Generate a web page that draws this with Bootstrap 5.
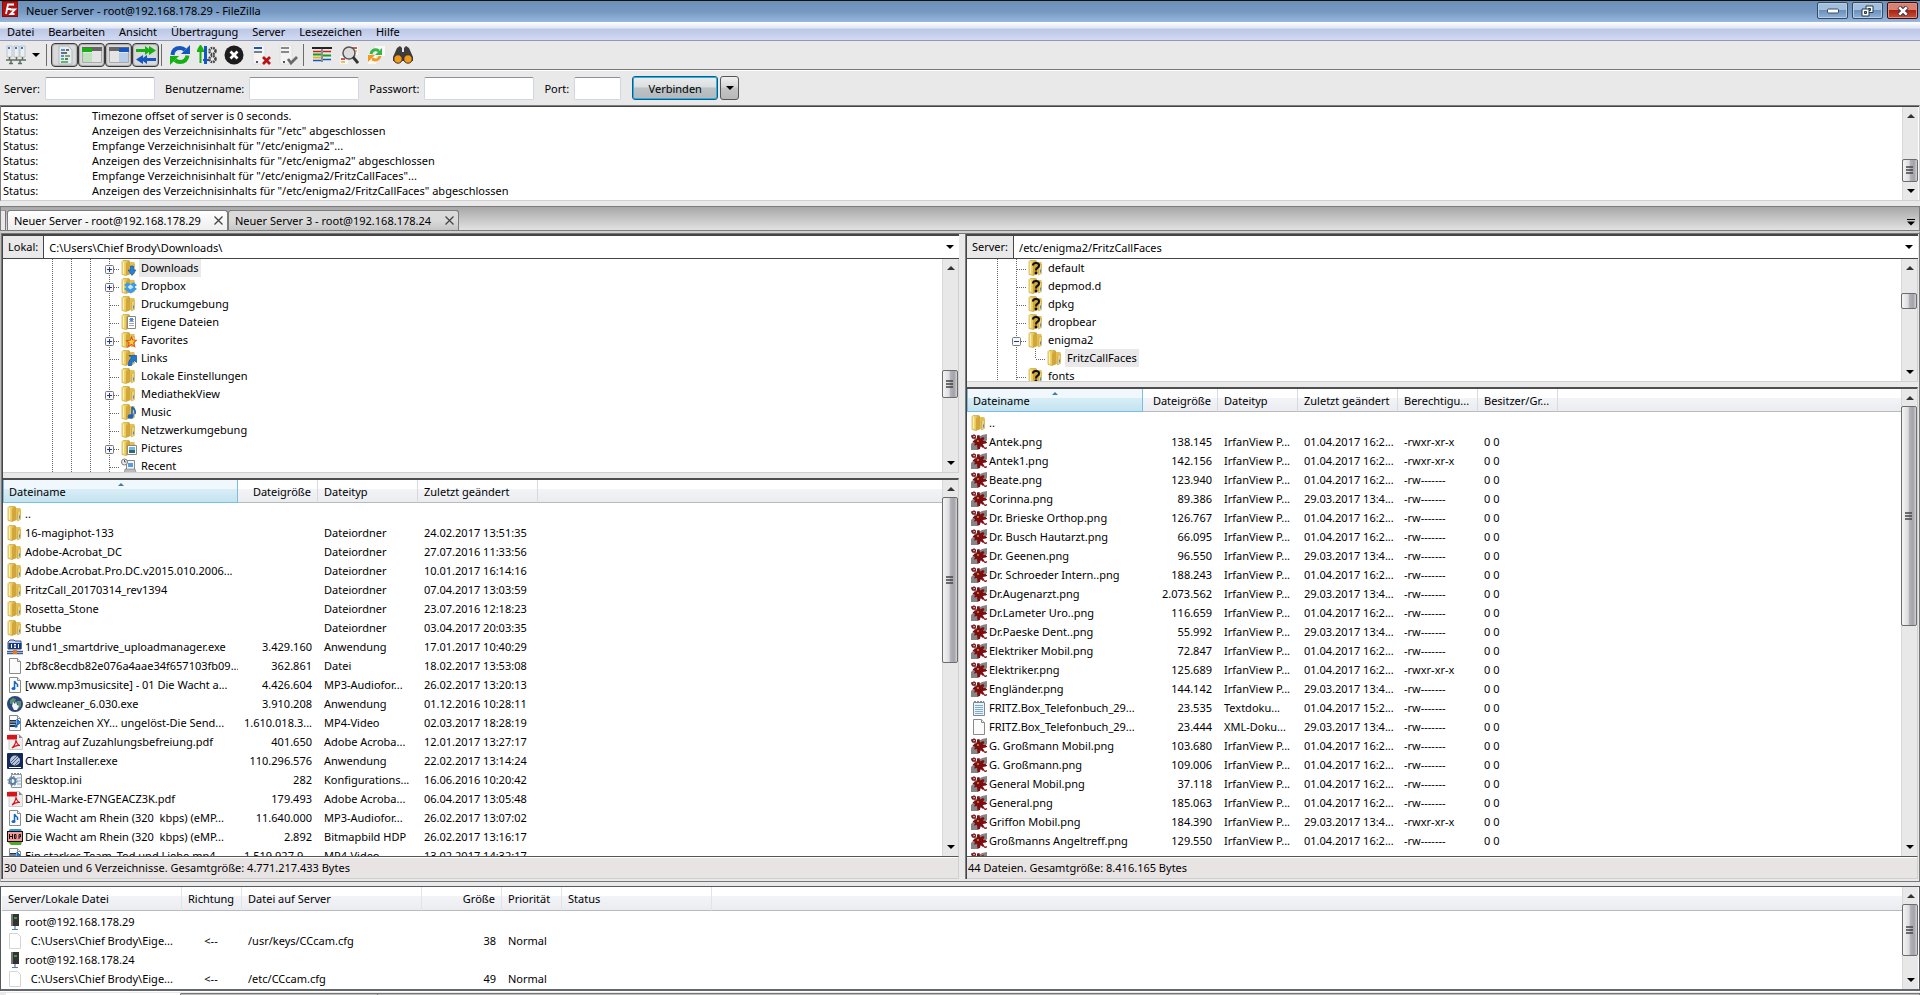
<!DOCTYPE html>
<html lang="de">
<head>
<meta charset="utf-8">
<meta name="viewport" content="width=device-width, initial-scale=1">
<title>Neuer Server - root@192.168.178.29 - FileZilla</title>
<link href="https://cdn.jsdelivr.net/npm/bootstrap@5.3.0/dist/css/bootstrap.min.css" rel="stylesheet">
<style>
:root{--face:#e9e9e9;--dark:#454545;--mid:#7b7b7b;--lite:#d0d0d0}
html,body{height:100%}
body{font-family:"Noto Sans","Open Sans",sans-serif;font-size:11px;line-height:15px;color:#000;background:var(--face)}
body>*{flex-shrink:0}
svg{flex:none;display:block}
button,input{font:inherit}
.titlebar{height:22px;border-top:1px solid #111;background:linear-gradient(#6d90b8,#7599c2 50%,#98b6de);padding:0 2px}
.winbtn{width:31px;height:17px;border:1px solid #35495f;border-radius:2px;padding:0;margin-top:1px;box-shadow:inset 0 0 0 1px #b4cce8;background:linear-gradient(#a3bfde 45%,#6b90b9 50%,#8fb2da)}
.winbtn.close-win{border-color:#3b0d0d;box-shadow:inset 0 0 0 1px #e0917f;background:linear-gradient(#d88173 45%,#a82413 50%,#c9503c)}
.winbtn svg{margin:auto}
.menubar{height:19px;background:linear-gradient(#fff,#dfe5f2 35%,#b9c6e5 38%,#d3daf2);border-bottom:1px solid #8f99b5;padding:1px 7px 0;gap:14px}
.menubar a{color:#000;text-decoration:none}
.toolbar{height:30px;border-bottom:1px solid #fff;box-shadow:inset 0 -1px #777;padding:0 6px 2px}
.tool{border:0;background:none;padding:0;width:27px;height:24px}
.tool.slim{width:20px}
.tool svg{margin:auto}
.tool.on{border:1px solid #3a3a3a;border-radius:4px;background:#dadada;box-shadow:inset 0 0 1px 1px #aaa}
.vsep{width:1px;height:22px;background:#6c6c6c;margin:0 4px 0 2px}
.quick{height:34px;padding:0 4px}
.quick label{margin-right:5px}
.quick input{width:110px;height:23px;border:1px solid #cfd6e6;border-top-color:#8a8f99;border-radius:2px;background:#fff;margin-right:10px;padding:0 4px}
.quick input.port{width:47px;margin-right:11px}
.connect{width:86px;height:24px;border:1px solid #145a86;border-radius:3px;box-shadow:inset 0 0 0 1px #23b4ea;background:linear-gradient(#ececec,#dcdfe0 45%,#bcc3c6 50%,#b2b8bb)}
.connect-more{width:19px;height:24px;border:1px solid #555;border-radius:3px;margin-left:2px;padding:0;background:linear-gradient(#f0f0f0,#d6d6d6 45%,#c4c4c4 50%,#b8b8b8)}
.connect-more svg{margin:auto}
.log{height:96px;border:1px solid var(--mid);border-bottom-color:var(--lite);border-right-color:var(--lite);box-shadow:inset 0 1px var(--dark);background:#fff;padding:1px 1px 0 0}
.log dl{padding:1px 0 0 2px}
.log dl>div{height:15px}
.log dt{width:89px;font-weight:400}
.log dd{margin:0}
.tabstrip{margin-top:5px;height:25px;border:1px solid var(--mid);background:linear-gradient(#a7a7a7,#e2e2e2)}
.tabstub{width:5px;height:20px;border-right:1px solid #777;border-top:1px solid #999;background:#e9e9e9;margin-right:1px}
.ctab{height:20px;border:1px solid var(--mid);border-bottom:0;border-radius:3px 3px 0 0;padding:0 4px 0 6px;width:231px;background:linear-gradient(#dadada 50%,#c6c6c6);}
.ctab.on{width:221px;background:linear-gradient(#fff,#eee)}
.ctab button{border:0;background:none;padding:0}
.main{flex:1 1 0;min-height:0;border-top:2px solid var(--lite);border-right:1px solid #777;border-left:1px solid #bbb;border-bottom:1px solid #777}
.main>.inner{gap:6px;min-height:0;border-top:1px solid #777;padding:0 1px 2px 0}
.side{min-width:0;border-left:1px solid var(--mid);box-shadow:inset 1px 0 var(--dark);padding-left:1px}
.side.local{flex:958 1 0}
.side.remote{flex:953 1 0}
.addr{height:25px;border-top:2px solid var(--dark);border-bottom:1px solid var(--dark);background:#fff;padding-right:5px}
.addr label{background:var(--face);border-right:1px solid var(--dark);padding:3px 5px}
.addr input{border:0;padding:0 5px;background:none;min-width:0}
.addr button{border:0;background:none;padding:0}
.pane{background:#fff;min-height:0;overflow:hidden;border-right:1px solid var(--lite)}
.tree{flex:none;border-bottom:1px solid var(--lite)}
.local .tree{height:214px}
.remote .tree{height:123px}
.tree ul{padding-left:40px}
.remote .tree ul{padding-left:21px}
.tree li{height:18px}
.tree li .nm{padding:1px 2px 2px;margin-left:2px}
.tree li .nm.sel{background:var(--face)}
.tree li .ic{margin-left:2px}
.listing{flex:1 1 0;margin-top:5px;border-top:2px solid #4e4e4e}
.files{table-layout:fixed;width:100%;border-collapse:separate;border-spacing:0;white-space:nowrap}
.files th{height:23px;padding:0 6px;font-weight:400;background:linear-gradient(#fff 40%,#f2f4f8 40%,#eaecf0);border-bottom:1px solid #b8babe;border-right:1px solid #d8dadd;overflow:hidden;position:relative}
.files th:last-child{border-right:0}
.files th.sorted{background:linear-gradient(#f0f8fd 40%,#d8eef7 40%,#c4e3ef);border:solid #78bfe3;border-width:0 1px 1px 1px;padding-left:5px}
.files th.sorted svg{position:absolute;top:2px;left:50%;margin-left:-4px}
.files td{height:19px;padding:0 6px;overflow:hidden}
.files td.fn{padding:0 0 0 4px}
.files td.fn span{padding-left:2px;white-space:pre}
.files tbody:before{content:"";display:block;height:1px}
.files .num{text-align:right}
.sbar{width:16px;flex:none;border-left:1px solid #d8d8d8;background:#e8e8e8;padding:3px 0}
.sbar .arr{height:14px}
.sbar svg{margin:auto}
.thumb{border:1px solid #6c6c6c;border-radius:2px;margin-left:-1px;background:linear-gradient(90deg,#f4f4f4,#dcdce0 45%,#b4b4ba 50%,#a2a2aa 80%,#d5d5d8)}
.state{height:23px;background:#e9e4e4;border-top:1px solid #555;border-bottom:1px solid var(--lite);border-right:1px solid var(--lite);box-shadow:inset 0 1px #fff;padding:3px 1px}
.queue{margin-top:4px;height:105px;border:1px solid #555a60;border-bottom:2px solid #63686c;background:#fff;padding:0 1px}
.queue .files th{height:24px;border-right-color:#e2e3e6}
.queue .files td.fn{padding-left:5px}
.queue .dir{text-align:center;padding-right:8px}
.qtabs{height:4px;border-top:1px solid #fff}
.qtabs div{margin-top:1px;height:2px;border-top:1px solid #777;background:#bbb;border-right:1px solid #777}
.qtabs div.on{background:#fff;border-top-color:#fff;width:175px;margin-left:6px}
.qtabs div.off{width:197px}
</style>
</head>
<body class="d-flex flex-column overflow-hidden">
<svg width="0" height="0" class="position-absolute" aria-hidden="true">
<defs>
<linearGradient id="gf" x1="0" x2="1"><stop offset="0" stop-color="#f9e68c"/><stop offset=".5" stop-color="#e8c95a"/><stop offset="1" stop-color="#c99c2c"/></linearGradient>
<symbol id="folder" viewBox="0 0 16 16"><path d="M8 2h5.500v9l-5 4z" fill="#e3bf55"/><path d="M10.500 6l3-2v9.500l-3 1.500z" fill="#eed27a" stroke="#c49a30" stroke-width=".5"/><path d="M1 1.500l1-1h5.500q1 0 1 1V14L5 15.500l-4-1z" fill="url(#gf)" stroke="#c49a30" stroke-width=".6"/><path d="M5 3.500L8.500 1v13L5 15.500z" fill="#d2a63a"/><path d="M2.500 2.500v11" stroke="#fff3b0"/><path d="M12.500 9.500v3" stroke="#3a8fe0"/></symbol>
<symbol id="page" viewBox="0 0 16 16"><path d="M2.500.5h8l3 3v12h-11z" fill="#fbfbfb" stroke="#8a8a8a"/><path d="M10.500.5v3h3" fill="#eee" stroke="#8a8a8a"/></symbol>
<symbol id="blank" viewBox="0 0 16 16"><path d="M2.500.5h8l3 3v12h-11z" fill="#fff" stroke="#d4d4d4"/></symbol>
<symbol id="irfan" viewBox="0 0 16 16"><path d="M0 1l6 3 5-3 5-1v6l-6 6-3 4H0v-6l4-4-4-3z" fill="#858585"/><path d="M6 1.500l2.500-.5.5 3.500 3-1.500 1.500 1-1.500 3 3 .3v2.200l-3.500.5 2 3-1.500 1-2.500-2L9 15l-2.500.5L6 11l-3 .5L4 9 1.500 7.500l2-1.500L6 5z" fill="#7e0d12"/><path d="M1 2l2-1 1.500 1L4 4H1.500zM13 8.500q2-1 3 .5M13 13.500q1.500 1.500 3 0" stroke="#7e0d12" fill="none" stroke-width="1.200"/><circle cx="7" cy="7" r=".8" fill="#ff3"/></symbol>
<symbol id="text" viewBox="0 0 16 16"><path d="M2.500 2.500h11v13h-11z" fill="#e8f2fa" stroke="#7d8a96"/><path d="M3 1.500h2m1 0h2m1 0h2m1 0h1" stroke="#888"/><path d="M4 5.500h8M4 7.500h8M4 9.500h8M4 11.500h8M4 13.500h8" stroke="#86abc9"/></symbol>
<symbol id="mp3" viewBox="0 0 16 16"><use href="#page"/><path d="M7.500 4v7M7.500 4q1 2 3 3.500V10" fill="none" stroke="#1567c4" stroke-width="1.500"/><ellipse cx="6.500" cy="11.500" rx="2" ry="1.600" fill="#1567c4"/></symbol>
<symbol id="mp4" viewBox="0 0 16 16"><use href="#page"/><path d="M3 5h6v7H3z" fill="#20364e"/><path d="M3 7h6M3 9.500h6" stroke="#a9cbe8"/><path d="M10 4v6q3-1 3-3z" fill="#2b86dc" stroke="#1567c4"/><circle cx="9" cy="11" r="1.700" fill="#1567c4"/></symbol>
<symbol id="pdf" viewBox="0 0 16 16"><path d="M2 .5h10l3.500 3.500v11.500H2z" fill="#eee" stroke="#ccc"/><path d="M12 .5V4h3.500z" fill="#888"/><path d="M0 1h10v4.500H0z" fill="#d8131a"/><path d="M5 14q4-4 4-8 1 5 4 5.500-4-1-8 2.500z" fill="none" stroke="#d8131a" stroke-width="1.200"/></symbol>
<symbol id="adw" viewBox="0 0 16 16"><circle cx="8" cy="8" r="8" fill="#27477e"/><path d="M3 4l3-2 3 1-2 4-4 1zM10 5l4 0 0 5-3 3z" fill="#5d8f6c"/><path d="M6 6l2 2 1-3 1 4 2 1-2 4H7l-2-4z" fill="#f5f5f5"/></symbol>
<symbol id="chart" viewBox="0 0 16 16"><rect width="16" height="16" rx="1" fill="#12295c"/><circle cx="8" cy="7.500" r="5" fill="#b9c4d6"/><path d="M4 9l6-6M5 11l7-7M8 12l4-4" stroke="#4e6287"/><path d="M2 14.500h12" stroke="#fff"/></symbol>
<symbol id="ini" viewBox="0 0 16 16"><path d="M4.500 2.500h10v13h-10z" fill="#f2f6f9" stroke="#8c969f"/><path d="M4 1.500h2m1 0h2m1 0h2m1 0h1" stroke="#888"/><path d="M10 6h4M10 9h4M10 12h4" stroke="#86abc9"/><circle cx="5.500" cy="9" r="3" fill="none" stroke="#5c7d9e" stroke-width="2"/><circle cx="5.500" cy="9" r="4.600" fill="none" stroke="#5c7d9e" stroke-dasharray="1.800 1.800"/></symbol>
<symbol id="hdp" viewBox="0 0 16 16"><path d="M3 0h11l1 3H1z" fill="#279bd3"/><path d="M1 13h14l-1 3H4z" fill="#58a52e"/><rect x=".5" y="2.500" width="15" height="10" fill="#f39a98" stroke="#111"/><path d="M2.500 5v5M5.500 5v5M3 7.500h2M7.500 5.500h1.500v4H7.500zM12 10V5.500h1.500v2.500H12" stroke="#111" fill="none"/></symbol>
<symbol id="einsund" viewBox="0 0 16 16"><path d="M1 3l2-2h4l1 1h6v8H1z" fill="#c9d4ea" stroke="#35507f"/><rect x="1.500" y="4" width="13" height="6" fill="#173a80"/><path d="M4.500 5v4M11.500 5v4M7 5.500h2M7 8.500h2M7 7h2" stroke="#fff"/><path d="M0 12.500h16M0 14.500h16" stroke="#44608f" stroke-width="1.500"/><rect x="6" y="11" width="4" height="4" fill="#e8742a"/></symbol>
<symbol id="server" viewBox="0 0 16 16"><path d="M4 0h8v12H4z" fill="#333"/><path d="M4 0h2v12H4z" fill="#777"/><path d="M7 3h3v2H7z" fill="#2e9b3c"/><path d="M8 12v3M5 15.500h6" stroke="#5d7f9e" stroke-width="1.200"/></symbol>
<symbol id="f-down" viewBox="0 0 16 16"><use href="#folder"/><path d="M9.500 6h3v4h2.500l-4 5.500L7 10h2.500z" fill="#2381e0" stroke="#0e4fa0" stroke-width=".6"/></symbol>
<symbol id="f-box" viewBox="0 0 16 16"><use href="#folder"/><path d="M6.500 4.500L9.500 6l3-1.500 3.500 2.500-2.500 2 2.500 2-3.500 2.500-3 2-3-2L3 11l2.500-2L3 7z" fill="#3d9ae8"/><path d="M9.500 6.500l3 2.500-3 2.500-3-2.500z" fill="#cfe6fa"/></symbol>
<symbol id="f-doc" viewBox="0 0 16 16"><use href="#folder"/><path d="M6.500 2.500h8v12h-8z" fill="#fff" stroke="#888"/><path d="M8 5.500h5M8 7.500h5M8 9.500h5M8 11.500h5" stroke="#9ab"/><path d="M9 4h3v3H9z" fill="#4a90d9"/></symbol>
<symbol id="f-star" viewBox="0 0 16 16"><use href="#folder"/><path d="M10.500 5l1.300 3 3.700.3-2.800 2.300 1 4-3.200-2.200L7 15l1.200-4-2.700-2.500 3.700-.3z" fill="#ffd23c" stroke="#e2571b" stroke-width="1.100"/></symbol>
<symbol id="f-link" viewBox="0 0 16 16"><use href="#folder"/><path d="M8 5.500h7.500v7l-2-2q-3 1-3 5l-3 .5q-.5-6 3-8z" fill="#2078d6" stroke="#0d4a96" stroke-width=".7"/></symbol>
<symbol id="f-music" viewBox="0 0 16 16"><use href="#folder"/><path d="M11 3v9M11 3q4 3 3 7" fill="none" stroke="#1b62bd" stroke-width="1.600"/><ellipse cx="9.500" cy="12.500" rx="2.800" ry="2.200" fill="#1b62bd"/></symbol>
<symbol id="f-pic" viewBox="0 0 16 16"><use href="#folder"/><path d="M6.500 5.500h9v9h-9z" fill="#fff" stroke="#888"/><path d="M8 7h6v3H8z" fill="#6db7ea"/><path d="M8 10h6v3H8z" fill="#2b6d63"/></symbol>
<symbol id="f-recent" viewBox="0 0 16 16"><path d="M5.500 2.500h8v9h-8z" fill="#f2f5f9" stroke="#888"/><path d="M7 5h5v4H7z" fill="#5a9ddd"/><path d="M4 11h10l1.500 5H3z" fill="#b9bdc2" stroke="#777" stroke-width=".6"/><circle cx="3.500" cy="4" r="3" fill="#eee" stroke="#777"/><path d="M3.500 2v2H5" stroke="#555" fill="none"/></symbol>
<symbol id="f-q" viewBox="0 0 16 16"><use href="#folder"/><path d="M5 5.500Q5 3 8 3q3 0 3 2.500 0 1.500-1.500 2.300Q8 8.500 8 10.500" fill="none" stroke="#111" stroke-width="2.200"/><circle cx="8" cy="13" r="1.400" fill="#111"/></symbol>
<symbol id="g-v" viewBox="0 0 19 18"><path d="M9.500 0v18" stroke="#666" stroke-dasharray="1 1"/></symbol>
<symbol id="g-t" viewBox="0 0 19 18"><path d="M9.500 0v18M10 10.500h9" stroke="#666" stroke-dasharray="1 1"/></symbol>
<symbol id="g-l" viewBox="0 0 19 18"><path d="M9.500 0v10M10 10.500h9" stroke="#666" stroke-dasharray="1 1" fill="none"/></symbol>
<symbol id="g-plus" viewBox="0 0 19 18"><use href="#g-t"/><rect x="5.500" y="6.500" width="8" height="8" rx="1" fill="#f8f8f8" stroke="#777"/><path d="M7 10.500h5M9.500 8v5" stroke="#1c3b8c"/></symbol>
<symbol id="g-minus" viewBox="0 0 19 18"><use href="#g-t"/><rect x="5.500" y="6.500" width="8" height="8" rx="1" fill="#f8f8f8" stroke="#777"/><path d="M7 10.500h5" stroke="#1c3b8c"/></symbol>
<symbol id="dn" viewBox="0 0 8 4"><path d="M0 0h8L4 4z"/></symbol>
<symbol id="up" viewBox="0 0 8 4"><path d="M0 4h8L4 0z" fill="#333"/></symbol>
<symbol id="grip" viewBox="0 0 8 8"><path d="M0 1h7M0 4h7M0 7h7" stroke="#444" stroke-width="1.400"/></symbol>
<symbol id="x" viewBox="0 0 9 9"><path d="M.5.500l8 8M8.500.500l-8 8" stroke="#444" stroke-width="1.300"/></symbol>
</defs>
</svg>

<header class="titlebar d-flex align-items-start">
  <svg width="16" height="16" viewBox="0 0 16 16"><rect width="16" height="16" fill="#b01212"/><rect x=".5" y=".5" width="15" height="15" fill="none" stroke="#6d0505" stroke-dasharray="1 1"/><path d="M4 13L6 3.500h6M5 8h4M8 8.500h5l-4.500 4.500h4" fill="none" stroke="#fff" stroke-width="1.800"/></svg>
  <span class="flex-grow-1 ps-2 pt-1 lh-1">Neuer Server - root@192.168.178.29 - FileZilla</span>
  <div class="d-flex gap-1" style="column-gap:2px">
    <button class="winbtn" type="button" aria-label="Minimieren"><svg width="12" height="6" viewBox="0 0 12 6"><rect x=".5" y="1" width="11" height="4" rx="1" fill="#fff" stroke="#3a4a60"/></svg></button>
    <button class="winbtn" type="button" aria-label="Verkleinern"><svg width="13" height="12" viewBox="0 0 13 12"><path d="M5 1h7v6.500H5z" fill="#fff" stroke="#27364b"/><path d="M7.500 3.500h2v2h-2z" fill="#7fa2c9" stroke="#27364b"/><path d="M1 4h7v7H1z" fill="#fff" stroke="#27364b"/><path d="M3.500 6.500h2v2h-2z" fill="#7fa2c9" stroke="#27364b"/></svg></button>
    <button class="winbtn close-win" type="button" aria-label="Schließen"><svg width="12" height="10" viewBox="0 0 12 10"><path d="M2 1l8 8M10 1L2 9" stroke="#3d3040" stroke-width="4.500"/><path d="M2.300 1.300l7.400 7.400M9.700 1.300L2.300 8.700" stroke="#fff" stroke-width="2.600"/></svg></button>
  </div>
</header>

<nav class="menubar d-flex align-items-center">
  <a href="#">Datei</a><a href="#">Bearbeiten</a><a href="#">Ansicht</a><a href="#">Übertragung</a><a href="#">Server</a><a href="#">Lesezeichen</a><a href="#">Hilfe</a>
</nav>

<div class="toolbar d-flex align-items-center" role="toolbar">
  <button class="tool slim" type="button" aria-label="Servermanager"><svg width="20" height="20" viewBox="0 0 20 20"><path d="M1 1h5v11H1zM8 1h5v11H8zM14 1h5v11h-5z" fill="#eceff2" stroke="#bcc3c9"/><path d="M2 3h2M9 3h2M15 3h2" stroke="#2b7bd6" stroke-width="2"/><path d="M3.500 12v3M10.500 12v3M16.500 12v3M0 15h20M3 18.500h4M12 18.500h4M5 15v3M14 15v3" stroke="#5e6d62" stroke-width="1.500"/></svg></button>
  <button class="tool slim" type="button" aria-label="Serverliste"><svg width="8" height="4"><use href="#dn"/></svg></button>
  <span class="vsep ms-0"></span>
  <button class="tool on" type="button" aria-label="Protokoll"><svg width="20" height="20" viewBox="0 0 20 20"><path d="M4 1h9l4 4v14H4z" fill="#e8edf0" stroke="#b3babf"/><path d="M6 5h4M6 11h3" stroke="#2b6fc6" stroke-width="1.500"/><path d="M11 5h3M6 8h6M10 14h3" stroke="#444" stroke-width="1.500"/><path d="M10 11h5M6 14h3M6 17h7" stroke="#3a9f48" stroke-width="1.500"/></svg></button>
  <button class="tool on" type="button" aria-label="Lokaler Verzeichnisbaum"><svg width="22" height="20" viewBox="0 0 22 20"><path d="M1.500 2.500h19v15h-19z" fill="#e4e4e4" stroke="#aaa"/><path d="M1 2h20v4H1z" fill="#666"/><path d="M1 3h10v4H1z" fill="#14b014"/><path d="M2 8h9v9H2z" fill="#bfe0bf"/></svg></button>
  <button class="tool on" type="button" aria-label="Server-Verzeichnisbaum"><svg width="22" height="20" viewBox="0 0 22 20"><path d="M1.500 2.500h19v15h-19z" fill="#e4e4e4" stroke="#aaa"/><path d="M1 2h20v4H1z" fill="#666"/><path d="M11 3h10v4H11z" fill="#1457c0"/><path d="M11 8h9v9h-9z" fill="#b9cde8"/></svg></button>
  <button class="tool on" type="button" aria-label="Warteschlange"><svg width="20" height="20" viewBox="0 0 20 20"><path d="M0 4h3v3H0zM3 4h6V1l4 3V1l7 4.500-7 4.500V7L9 10V7H3z" fill="#14b014"/><path d="M20 13h-3v3h3zM17 13h-6v-3l-4 3v-3l-7 4.500L7 19v-3l4 3v-3h6z" fill="#1457c0"/></svg></button>
  <span class="vsep"></span>
  <button class="tool" type="button" aria-label="Aktualisieren"><svg width="20" height="20" viewBox="0 0 20 20"><path d="M2.500 10Q3 3 10 3q3 0 5 2" fill="none" stroke="#1457c0" stroke-width="4"/><path d="M11 9h9V0z" fill="#1457c0"/><path d="M17.500 10.500q-1 6.500-7.500 6.500-3 0-5-2" fill="none" stroke="#14b014" stroke-width="4"/><path d="M9 11H0v9z" fill="#14b014"/></svg></button>
  <button class="tool" type="button" aria-label="Verarbeiten"><svg width="20" height="20" viewBox="0 0 20 20"><path d="M3.500 1v17M0 6h7M1 5l2.500-4L6 5" stroke="#14b014" stroke-width="2" fill="none"/><path d="M8.500 1v18" stroke="#1457c0" stroke-width="3"/><path d="M6 15h6" stroke="#1457c0" stroke-width="2"/><circle cx="15.500" cy="6" r="3" fill="none" stroke="#444" stroke-width="2.500" stroke-dasharray="1.600 .8"/><circle cx="15.500" cy="14" r="3" fill="none" stroke="#444" stroke-width="2.500" stroke-dasharray="1.600 .8"/></svg></button>
  <button class="tool" type="button" aria-label="Abbrechen"><svg width="20" height="20" viewBox="0 0 20 20"><circle cx="10" cy="10" r="9.500" fill="#1c1c1c"/><path d="M6.500 6.500l7 7M13.500 6.500l-7 7" stroke="#fff" stroke-width="2.800"/></svg></button>
  <button class="tool" type="button" aria-label="Trennen"><svg width="20" height="20" viewBox="0 0 20 20"><path d="M2 0h12v19H2z" fill="#f3f3f3" stroke="#e0e0e0"/><path d="M3 3h8" stroke="#1457c0" stroke-width="2"/><path d="M3 7h8" stroke="#555" stroke-width="1.500"/><path d="M5 17h2" stroke="#555" stroke-width="2"/><path d="M12 12l7 7M19 12l-7 7" stroke="#b81414" stroke-width="2.800"/></svg></button>
  <button class="tool" type="button" aria-label="Verbinden"><svg width="20" height="20" viewBox="0 0 20 20"><path d="M2 0h12v19H2z" fill="#f3f3f3" stroke="#e0e0e0"/><path d="M3 3h8M3 7h8" stroke="#666" stroke-width="1.500"/><path d="M5 17h2" stroke="#555" stroke-width="2"/><path d="M10 14l3 4 6-6" fill="none" stroke="#6a6a6a" stroke-width="2.800"/></svg></button>
  <span class="vsep"></span>
  <button class="tool" type="button" aria-label="Filter"><svg width="20" height="20" viewBox="0 0 20 20"><path d="M0 3h20" stroke="#222" stroke-width="2"/><path d="M1 6.500h8M11 6.500h8" stroke="#c62020" stroke-width="1.500"/><path d="M1 9.500h8M11 10.500h8" stroke="#14a014" stroke-width="1.800"/><path d="M1 12.500h8" stroke="#e9b21d" stroke-width="1.800"/><path d="M1 15.500h8M11 14.500h8" stroke="#1457c0" stroke-width="1.500"/><path d="M10 2v15" stroke="#333"/></svg></button>
  <button class="tool" type="button" aria-label="Vergleich"><svg width="20" height="20" viewBox="0 0 20 20"><path d="M10 1h9v9h-9zM1 11h8v8H1z" fill="#f6f6f6"/><path d="M13 3h5M2 14h4" stroke="#c62020" stroke-width="1.500"/><path d="M14 6h4M2 17h4" stroke="#e9b21d" stroke-width="1.500"/><circle cx="10" cy="8" r="6" fill="#dcdcdc" stroke="#555" stroke-width="1.500"/><path d="M14 12l5 6" stroke="#333" stroke-width="2.800"/></svg></button>
  <button class="tool" type="button" aria-label="Synchron"><svg width="20" height="20" viewBox="0 0 20 20"><path d="M9 1h10v10H9zM2 10h8v9H2z" fill="#f8f8f8"/><path d="M5 9q1-5 6-4l2 1" fill="none" stroke="#35b648" stroke-width="3"/><path d="M9 10h7V3z" fill="#35b648"/><path d="M14 11q-1 4-5 4l-3-1" fill="none" stroke="#f39a1e" stroke-width="3"/><path d="M9 10H2v7z" fill="#f39a1e"/></svg></button>
  <button class="tool" type="button" aria-label="Suchen"><svg width="20" height="20" viewBox="0 0 20 20"><path d="M4 3l3-2 2 2v4h2V3l2-2 3 2 4 9v4H0v-4z" fill="#3d3d3d"/><circle cx="5" cy="14" r="4.200" fill="#f29a18" stroke="#333"/><circle cx="15" cy="14" r="4.200" fill="#f29a18" stroke="#333"/></svg></button>
</div>

<form class="quick d-flex align-items-center" onsubmit="return false">
  <label for="q1">Server:</label><input id="q1" type="text">
  <label for="q2">Benutzername:</label><input id="q2" type="text">
  <label for="q3">Passwort:</label><input id="q3" type="password">
  <label for="q4">Port:</label><input id="q4" type="text" class="port">
  <button class="connect" type="submit">Verbinden</button>
  <button class="connect-more" type="button" aria-label="Verlauf"><svg width="8" height="4"><use href="#dn"/></svg></button>
</form>

<section class="log d-flex">
  <dl class="flex-grow-1 mb-0">
    <div class="d-flex"><dt>Status:</dt><dd>Timezone offset of server is 0 seconds.</dd></div>
    <div class="d-flex"><dt>Status:</dt><dd>Anzeigen des Verzeichnisinhalts für "/etc" abgeschlossen</dd></div>
    <div class="d-flex"><dt>Status:</dt><dd>Empfange Verzeichnisinhalt für "/etc/enigma2"...</dd></div>
    <div class="d-flex"><dt>Status:</dt><dd>Anzeigen des Verzeichnisinhalts für "/etc/enigma2" abgeschlossen</dd></div>
    <div class="d-flex"><dt>Status:</dt><dd>Empfange Verzeichnisinhalt für "/etc/enigma2/FritzCallFaces"...</dd></div>
    <div class="d-flex"><dt>Status:</dt><dd>Anzeigen des Verzeichnisinhalts für "/etc/enigma2/FritzCallFaces" abgeschlossen</dd></div>
  </dl>
  <div class="sbar" data-bar="36,22,1,grip"></div>
</section>

<div class="tabstrip d-flex align-items-end">
  <span class="tabstub"></span>
  <div class="ctab on d-flex align-items-center justify-content-between"><span>Neuer Server - root@192.168.178.29</span><button type="button" aria-label="Tab schließen"><svg width="9" height="9"><use href="#x"/></svg></button></div>
  <div class="ctab d-flex align-items-center justify-content-between"><span>Neuer Server 3 - root@192.168.178.24</span><button type="button" aria-label="Tab schließen"><svg width="9" height="9"><use href="#x"/></svg></button></div>
  <svg class="ms-auto me-1 mb-1" width="8" height="7" viewBox="0 0 8 7"><path d="M0 0h8v1H0zM0 2.500h8L4 6.500z"/></svg>
</div>

<main class="main d-flex">
  <div class="inner d-flex flex-grow-1">
    <section class="side local d-flex flex-column">
      <div class="addr d-flex align-items-stretch"><label for="lp">Lokal:</label><input id="lp" class="flex-grow-1" value="C:\Users\Chief Brody\Downloads\"><button type="button" aria-label="Verlauf"><svg width="8" height="4"><use href="#dn"/></svg></button></div>
      <div class="pane tree d-flex"><ul class="list-unstyled mb-0 flex-grow-1" id="ltree"></ul><div class="sbar" data-bar="96,26,58,grip"></div></div>
      <div class="pane listing d-flex"><div class="flex-grow-1 overflow-hidden">
        <table class="files"><colgroup><col style="width:235px"><col style="width:80px"><col style="width:100px"><col style="width:120px"><col></colgroup>
        <thead><tr><th class="sorted">Dateiname<svg width="8" height="4" viewBox="0 0 8 4"><path d="M1 4h6L4 1z" fill="#3b7fa5"/></svg></th><th class="num">Dateigröße</th><th>Dateityp</th><th>Zuletzt geändert</th><th></th></tr></thead><tbody id="llist"></tbody></table></div>
        <div class="sbar" data-bar="0,164,177,grip"></div></div>
      <div class="state">30 Dateien und 6 Verzeichnisse. Gesamtgröße: 4.771.217.433 Bytes</div>
    </section>
    <section class="side remote d-flex flex-column">
      <div class="addr d-flex align-items-stretch"><label for="rp">Server:</label><input id="rp" class="flex-grow-1" value="/etc/enigma2/FritzCallFaces"><button type="button" aria-label="Verlauf"><svg width="8" height="4"><use href="#dn"/></svg></button></div>
      <div class="pane tree d-flex"><ul class="list-unstyled mb-0 flex-grow-1" id="rtree"></ul><div class="sbar" data-bar="17,15,56,"></div></div>
      <div class="pane listing d-flex"><div class="flex-grow-1 overflow-hidden">
        <table class="files"><colgroup><col style="width:176px"><col style="width:75px"><col style="width:80px"><col style="width:100px"><col style="width:80px"><col style="width:80px"><col></colgroup>
        <thead><tr><th class="sorted">Dateiname<svg width="8" height="4" viewBox="0 0 8 4"><path d="M1 4h6L4 1z" fill="#3b7fa5"/></svg></th><th class="num">Dateigröße</th><th>Dateityp</th><th>Zuletzt geändert</th><th>Berechtigu...</th><th>Besitzer/Gr...</th><th></th></tr></thead><tbody id="rlist"></tbody></table></div>
        <div class="sbar" data-bar="0,218,214,grip"></div></div>
      <div class="state">44 Dateien. Gesamtgröße: 8.416.165 Bytes</div>
    </section>
  </div>
</main>

<section class="queue d-flex"><div class="flex-grow-1 overflow-hidden">
  <table class="files"><colgroup><col style="width:180px"><col style="width:60px"><col style="width:180px"><col style="width:80px"><col style="width:60px"><col style="width:150px"><col></colgroup>
  <thead><tr><th>Server/Lokale Datei</th><th>Richtung</th><th>Datei auf Server</th><th class="num">Größe</th><th>Priorität</th><th>Status</th><th></th></tr></thead><tbody id="qlist"></tbody></table></div>
  <div class="sbar" data-bar="0,51,16,grip"></div>
</section>
<div class="qtabs d-flex"><div class="on"></div><div class="off"></div><div class="flex-grow-1"></div></div>

<script>
const icon=(n,c='')=>`<svg class="${c}" width="16" height="16"><use href="#${n}"/></svg>`;
const guide=n=>`<svg width="19" height="18"><use href="#g-${n}"/></svg>`;
const tree=(id,rows)=>document.getElementById(id).innerHTML=rows.map(([g,i,t,s])=>`<li class="d-flex align-items-center">${g.split(' ').map(guide).join('')}${icon(i,'ic')}<span class="nm${s?' sel':''}">${t}</span></li>`).join('');
tree('ltree',[['p','f-down','Downloads',1],['p','f-box','Dropbox'],['t','folder','Druckumgebung'],['t','f-doc','Eigene Dateien'],['p','f-star','Favorites'],['t','f-link','Links'],['t','folder','Lokale Einstellungen'],['p','folder','MediathekView'],['t','f-music','Music'],['t','folder','Netzwerkumgebung'],['p','f-pic','Pictures'],['t','f-recent','Recent']].map(r=>['v v v '+(r[0]=='p'?'plus':'t'),...r.slice(1)]));
tree('rtree',[['v t','f-q','default'],['v t','f-q','depmod.d'],['v t','f-q','dpkg'],['v t','f-q','dropbear'],['v minus','folder','enigma2'],['v v l','folder','FritzCallFaces',1],['v t','f-q','fonts']]);

const list=(id,rows,num)=>document.getElementById(id).innerHTML=rows.trim().split('\n').map(l=>{
  const [ic,name,...c]=l.split('|');
  return `<tr><td class="fn"><div class="d-flex align-items-center">${icon(ic)}<span>${name}</span></div></td>`+c.map((v,k)=>`<td class="${k==num?'num':v=='&lt;--'?'dir':''}">${v}</td>`).join('')+'</tr>';
}).join('');
list('llist',`folder|..||||
folder|16-magiphot-133||Dateiordner|24.02.2017 13:51:35|
folder|Adobe-Acrobat_DC||Dateiordner|27.07.2016 11:33:56|
folder|Adobe.Acrobat.Pro.DC.v2015.010.2006...||Dateiordner|10.01.2017 16:14:16|
folder|FritzCall_20170314_rev1394||Dateiordner|07.04.2017 13:03:59|
folder|Rosetta_Stone||Dateiordner|23.07.2016 12:18:23|
folder|Stubbe||Dateiordner|03.04.2017 20:03:35|
einsund|1und1_smartdrive_uploadmanager.exe|3.429.160|Anwendung|17.01.2017 10:40:29|
page|2bf8c8ecdb82e076a4aae34f657103fb09...|362.861|Datei|18.02.2017 13:53:08|
mp3|[www.mp3musicsite] - 01 Die Wacht a...|4.426.604|MP3-Audiofor...|26.02.2017 13:20:13|
adw|adwcleaner_6.030.exe|3.910.208|Anwendung|01.12.2016 10:28:11|
mp4|Aktenzeichen XY... ungelöst-Die Send...|1.610.018.3...|MP4-Video|02.03.2017 18:28:19|
pdf|Antrag auf Zuzahlungsbefreiung.pdf|401.650|Adobe Acroba...|12.01.2017 13:27:17|
chart|Chart Installer.exe|110.296.576|Anwendung|22.02.2017 13:14:24|
ini|desktop.ini|282|Konfigurations...|16.06.2016 10:20:42|
pdf|DHL-Marke-E7NGEACZ3K.pdf|179.493|Adobe Acroba...|06.04.2017 13:05:48|
mp3|Die Wacht am Rhein (320  kbps) (eMP...|11.640.000|MP3-Audiofor...|26.02.2017 13:07:02|
hdp|Die Wacht am Rhein (320  kbps) (eMP...|2.892|Bitmapbild HDP|26.02.2017 13:16:17|
mp4|Ein starkes Team_Tod und Liebe.mp4|1.519.927.9...|MP4-Video|13.02.2017 14:32:17|`,0);
const a='01.04.2017 16:2...',b='29.03.2017 13:4...',x='-rwxr-xr-x',w='-rw-------';
list('rlist','folder|..||||||\n'+[['Antek.png','138.145',a,x],['Antek1.png','142.156',a,x],['Beate.png','123.940',a,w],['Corinna.png','89.386',b,w],['Dr. Brieske Orthop.png','126.767',a,w],['Dr. Busch Hautarzt.png','66.095',a,w],['Dr. Geenen.png','96.550',b,w],['Dr. Schroeder Intern..png','188.243',a,w],['Dr.Augenarzt.png','2.073.562',b,w],['Dr.Lameter Uro..png','116.659',a,w],['Dr.Paeske Dent..png','55.992',b,w],['Elektriker Mobil.png','72.847',a,w],['Elektriker.png','125.689',a,x],['Engländer.png','144.142',b,w],['FRITZ.Box_Telefonbuch_29...','23.535','01.04.2017 15:2...',w,'text','Textdoku...'],['FRITZ.Box_Telefonbuch_29...','23.444',b,w,'page','XML-Doku...'],['G. Großmann Mobil.png','103.680',a,w],['G. Großmann.png','109.006',a,w],['General Mobil.png','37.118',a,w],['General.png','185.063',a,w],['Griffon Mobil.png','184.390',b,x],['Großmanns Angeltreff.png','129.550',a,w],['Mobil.png','45.752',a,w]].map(r=>[r[4]||'irfan',r[0],r[1],r[5]||'IrfanView P...',r[2],r[3],'0 0',''].join('|')).join('\n'),0);
list('qlist',`server|root@192.168.178.29||||||
blank|  C:\\Users\\Chief Brody\\Eige...|&lt;--|/usr/keys/CCcam.cfg|38|Normal||
server|root@192.168.178.24||||||
blank|  C:\\Users\\Chief Brody\\Eige...|&lt;--|/etc/CCcam.cfg|49|Normal||`,2);
document.querySelectorAll('[data-bar]').forEach(e=>{
  const [t,h,r,g]=e.dataset.bar.split(',');
  e.classList.add('d-flex','flex-column');
  e.innerHTML=`<div class="arr d-flex align-items-start"><svg width="8" height="4" class="mt-1"><use href="#up"/></svg></div><div style="flex:${t} 1 0"></div><div class="thumb d-flex" style="flex:${h} 1 0">${g?'<svg width="8" height="8"><use href="#grip"/></svg>':''}</div><div style="flex:${r} 1 0"></div><div class="arr d-flex align-items-end"><svg width="8" height="4" class="mb-1"><use href="#dn"/></svg></div>`;
});
</script>
<script src="https://cdn.jsdelivr.net/npm/bootstrap@5.3.0/dist/js/bootstrap.bundle.min.js"></script>
</body>
</html>
